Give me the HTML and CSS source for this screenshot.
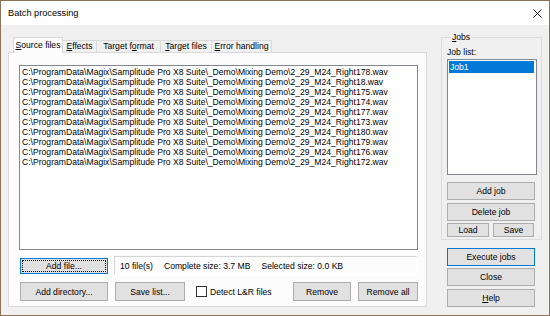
FILE: index.html
```html
<!DOCTYPE html>
<html lang="en">
<head>
    <meta charset="UTF-8">
    <title>Batch processing</title>
    <link rel="stylesheet" href="styles.css">
</head>
<body>
    <div class="window">
        <div class="titlebar">
            <span class="title">Batch processing</span>
            <svg class="close" width="9" height="9" viewBox="0 0 9 9">
                <path d="M0.5 0.5L8.5 8.5M8.5 0.5L0.5 8.5" stroke="#1a1a1a" stroke-width="1"/>
            </svg>
        </div>

        <div class="client">
            <div class="left">
                <div class="tab-strip">
                    <div class="tab active" style="width: 50px"><u>S</u>ource files</div>
                    <div class="tab" style="width: 35px"><u>E</u>ffects</div>
                    <div class="tab" style="width: 65px">Target f<u>o</u>rmat</div>
                    <div class="tab" style="width: 52px"><u>T</u>arget files</div>
                    <div class="tab" style="width: 61px"><u>E</u>rror handling</div>
                </div>
                <div class="tab-page">
                    <div class="listbox files">
                        <div>C:\ProgramData\Magix\Samplitude Pro X8 Suite\_Demo\Mixing Demo\2_29_M24_Right178.wav</div>
                        <div>C:\ProgramData\Magix\Samplitude Pro X8 Suite\_Demo\Mixing Demo\2_29_M24_Right18.wav</div>
                        <div>C:\ProgramData\Magix\Samplitude Pro X8 Suite\_Demo\Mixing Demo\2_29_M24_Right175.wav</div>
                        <div>C:\ProgramData\Magix\Samplitude Pro X8 Suite\_Demo\Mixing Demo\2_29_M24_Right174.wav</div>
                        <div>C:\ProgramData\Magix\Samplitude Pro X8 Suite\_Demo\Mixing Demo\2_29_M24_Right177.wav</div>
                        <div>C:\ProgramData\Magix\Samplitude Pro X8 Suite\_Demo\Mixing Demo\2_29_M24_Right173.wav</div>
                        <div>C:\ProgramData\Magix\Samplitude Pro X8 Suite\_Demo\Mixing Demo\2_29_M24_Right180.wav</div>
                        <div>C:\ProgramData\Magix\Samplitude Pro X8 Suite\_Demo\Mixing Demo\2_29_M24_Right179.wav</div>
                        <div>C:\ProgramData\Magix\Samplitude Pro X8 Suite\_Demo\Mixing Demo\2_29_M24_Right176.wav</div>
                        <div>C:\ProgramData\Magix\Samplitude Pro X8 Suite\_Demo\Mixing Demo\2_29_M24_Right172.wav</div>
                    </div>

                    <div class="row row-status">
                        <button class="btn btn-focus btn-add-file">Add file...</button>
                        <div class="status">
                            <span>10 file(s)</span>
                            <span>Complete size: 3.7 MB</span>
                            <span>Selected size: 0.0 KB</span>
                        </div>
                    </div>

                    <div class="row row-actions">
                        <button class="btn btn-add-dir">Add directory...</button>
                        <button class="btn btn-save-list">Save list...</button>
                        <label class="check">
                            <span class="check-box"></span>
                            Detect L&amp;R files
                        </label>
                        <button class="btn btn-remove">Remove</button>
                        <button class="btn btn-remove-all">Remove all</button>
                    </div>
                </div>
            </div>

            <div class="right">
                <fieldset class="group">
                    <legend><u>J</u>obs</legend>
                    <div class="group-label">Job list:</div>
                    <div class="listbox jobs">
                        <div class="selected">Job1</div>
                    </div>
                    <button class="btn btn-wide btn-add-job">Add job</button>
                    <button class="btn btn-wide btn-delete-job">Delete job</button>
                    <div class="load-save">
                        <button class="btn btn-load">Load</button>
                        <button class="btn btn-save">Save</button>
                    </div>
                </fieldset>

                <button class="btn btn-wide btn-focus btn-execute">Execute jobs</button>
                <button class="btn btn-wide btn-close">Close</button>
                <button class="btn btn-wide btn-help"><u>H</u>elp</button>
            </div>
        </div>
    </div>
</body>
</html>
```

FILE: styles.css
```css
:root {
    --face: #f0f0f0;
    --page: #fcfcfc;
    --frame: #8c7254;
    --tab-border: #d9d9d9;
    --btn-bg: #e1e1e1;
    --btn-border: #adadad;
    --accent: #0078d7;
}

* {
    margin: 0;
    padding: 0;
    box-sizing: border-box;
}

body {
    width: 550px;
    height: 316px;
    overflow: hidden;
    font-family: 'Liberation Sans', Arial, sans-serif;
    font-size: 8.6px;
    color: #000;
    background: var(--face);
}

u {
    text-decoration-thickness: 1px;
    text-underline-offset: 1px;
}

.window {
    width: 550px;
    height: 316px;
    border: 1px solid var(--frame);
    background: var(--face);
}

.titlebar {
    height: 24px;
    background: #fff;
    display: flex;
    align-items: center;
    justify-content: space-between;
    padding: 0 7px 0 7px;
}

.title {
    font-size: 9.2px;
}

.close {
    margin-top: 1px;
}

.client {
    display: flex;
    padding: 7px 0 0 7px;
}

.left {
    width: 419px;
    margin-top: 5px;
}

.tab-strip {
    display: flex;
    align-items: flex-end;
    height: 15px;
    padding-left: 5px;
}

.tab {
    height: 12px;
    line-height: 11px;
    text-align: center;
    white-space: nowrap;
    background: var(--face);
    border: 1px solid var(--tab-border);
    border-bottom: none;
    margin-left: -1px;
}

.tab.active {
    position: relative;
    z-index: 1;
    height: 16px;
    line-height: 13px;
    padding-top: 1px;
    margin-left: 0;
    margin-bottom: -1px;
    background: var(--page);
}

.tab-page {
    height: 255px;
    background: var(--page);
    border: 1px solid var(--tab-border);
    padding: 12px 8px 0 10px;
    display: flex;
    flex-direction: column;
}

.listbox {
    background: #fff;
    border: 1px solid #828790;
    line-height: 10px;
}

.files {
    width: 399px;
    height: 185px;
    padding: 1px 2px;
    white-space: nowrap;
    overflow: hidden;
}

.row {
    display: flex;
    align-items: center;
}

.row-status {
    margin-top: 6px;
    height: 19px;
}

.row-actions {
    margin-top: 7px;
    height: 19px;
}

.btn {
    font: inherit;
    color: #000;
    background: var(--btn-bg);
    border: 1px solid var(--btn-border);
    line-height: 10px;
    text-align: center;
    white-space: nowrap;
}

.btn-focus {
    border-color: var(--accent);
}

.btn-add-file {
    width: 88px;
    height: 16px;
    margin-left: 1px;
    outline: 1px dotted #000;
    outline-offset: -3px;
}

.status {
    width: 303px;
    height: 19px;
    margin-left: 6px;
    display: flex;
    align-items: center;
    gap: 11px;
    padding-left: 5px;
    border: 1px solid #d4d4d4;
    border-right-color: #fff;
    border-bottom-color: #fff;
}

.btn-add-dir {
    width: 88px;
    height: 19px;
    margin-left: 1px;
}

.btn-save-list {
    width: 70px;
    height: 19px;
    margin-left: 7px;
}

.check {
    display: flex;
    align-items: center;
    gap: 3px;
    margin-left: 11px;
}

.check-box {
    width: 11px;
    height: 11px;
    background: #fff;
    border: 1px solid #333;
}

.btn-remove {
    width: 58px;
    height: 19px;
    margin-left: auto;
}

.btn-remove-all {
    width: 60px;
    height: 19px;
    margin-left: 7px;
}

.right {
    width: 101px;
    margin-left: 14px;
    display: flex;
    flex-direction: column;
}

.group {
    border: 1px solid #dcdcdc;
    padding: 5px 4px 2px 5px;
    display: flex;
    flex-direction: column;
}

.group legend {
    line-height: 10px;
    padding: 0 1px;
    margin-left: 4px;
}

.group-label {
    line-height: 10px;
}

.jobs {
    width: 90px;
    height: 116px;
    margin-top: 2px;
    padding: 1px;
}

.jobs .selected {
    background: var(--accent);
    color: #fff;
    height: 12px;
    line-height: 12px;
    padding-left: 1px;
    margin-right: 1px;
}

.btn-wide {
    width: 88px;
    height: 18px;
}

.btn-add-job {
    margin-top: 7px;
}

.btn-delete-job {
    margin-top: 3px;
}

.load-save {
    display: flex;
    gap: 4px;
    margin-top: 2px;
}

.btn-load {
    width: 42px;
    height: 14px;
}

.btn-save {
    width: 41px;
    height: 14px;
}

.btn-execute {
    margin: 8px 0 0 6px;
}

.btn-close {
    margin: 2px 0 0 6px;
}

.btn-help {
    margin: 3px 0 0 6px;
}
```
